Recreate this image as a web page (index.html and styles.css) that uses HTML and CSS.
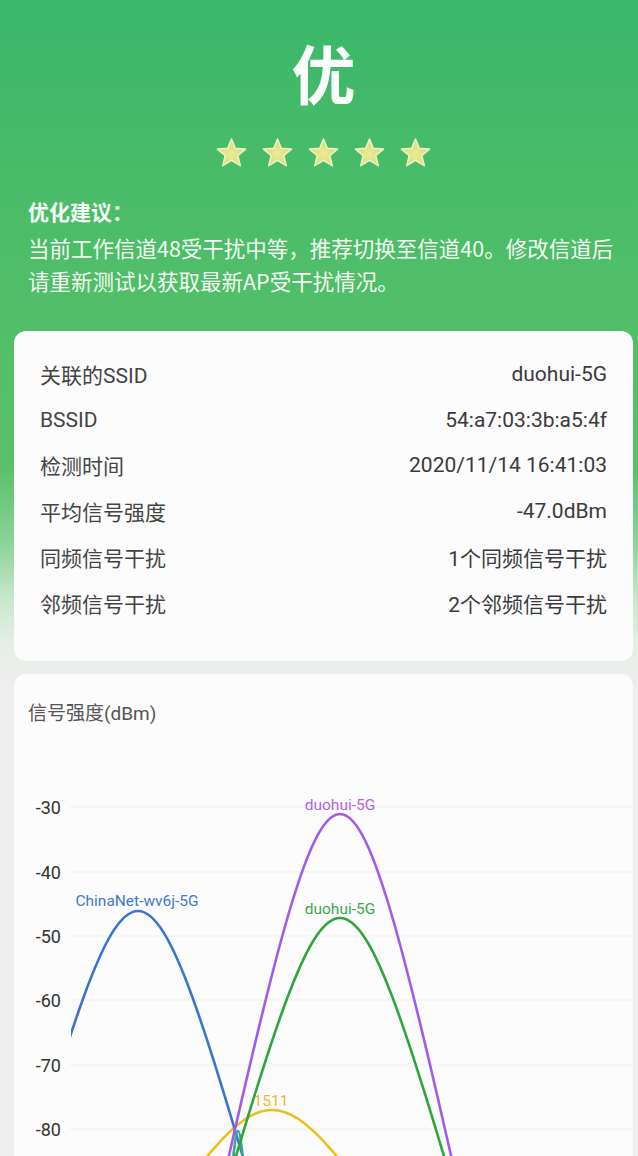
FILE: index.html
```html
<!DOCTYPE html>
<html lang="zh-CN">
<head>
<meta charset="utf-8">
<title>信号检测结果</title>
<link rel="stylesheet" href="styles.css">
</head>
<body>
<div class="page">
  <section class="hero">
    <div class="grade">优</div>
    <div class="stars">
      <svg viewBox="0 0 32 32"><use href="#star"/></svg>
      <svg viewBox="0 0 32 32"><use href="#star"/></svg>
      <svg viewBox="0 0 32 32"><use href="#star"/></svg>
      <svg viewBox="0 0 32 32"><use href="#star"/></svg>
      <svg viewBox="0 0 32 32"><use href="#star"/></svg>
    </div>
    <h2 class="advice-title">优化建议：</h2>
    <p class="advice-text">当前工作信道48受干扰中等，推荐切换至信道40。修改信道后请重新测试以获取最新AP受干扰情况。</p>
  </section>

  <section class="card info">
    <div class="row"><span class="label">关联的SSID</span><span class="value">duohui-5G</span></div>
    <div class="row"><span class="label">BSSID</span><span class="value">54:a7:03:3b:a5:4f</span></div>
    <div class="row"><span class="label">检测时间</span><span class="value">2020/11/14 16:41:03</span></div>
    <div class="row"><span class="label">平均信号强度</span><span class="value">-47.0dBm</span></div>
    <div class="row"><span class="label">同频信号干扰</span><span class="value">1个同频信号干扰</span></div>
    <div class="row"><span class="label">邻频信号干扰</span><span class="value">2个邻频信号干扰</span></div>
  </section>

  <section class="card chart">
    <div class="chart-title">信号强度(dBm)</div>
    <svg class="plot" viewBox="0 0 619 400">
      <defs>
        <clipPath id="plotArea"><rect x="57" y="0" width="562" height="400"/></clipPath>
      </defs>
      <g class="grid">
        <line x1="56" y1="48" x2="619" y2="48"/>
        <line x1="56" y1="113" x2="619" y2="113"/>
        <line x1="56" y1="177" x2="619" y2="177"/>
        <line x1="56" y1="241" x2="619" y2="241"/>
        <line x1="56" y1="306" x2="619" y2="306"/>
        <line x1="56" y1="370" x2="619" y2="370"/>
      </g>
      <g class="axis">
        <text x="47" y="48">-30</text>
        <text x="47" y="113">-40</text>
        <text x="47" y="177">-50</text>
        <text x="47" y="241">-60</text>
        <text x="47" y="306">-70</text>
        <text x="47" y="370">-80</text>
      </g>
      <g clip-path="url(#plotArea)" class="curves">
        <path class="c-yellow" d="M118,499 C258,301.7 258,301.7 398,499"/>
        <path class="c-blue" d="M-10.4,499 C124,36.3 124,36.3 258.4,499"/>
        <path class="c-teal" d="M211,499 C224,329.7 224,329.7 237,499"/>
        <path class="c-green" d="M191.6,499 C326,45.7 326,45.7 460.4,499"/>
        <path class="c-purple" d="M191.6,499 C326,-93 326,-93 460.4,499"/>
      </g>
      <g class="labels">
        <text class="l-purple" x="326" y="51">duohui-5G</text>
        <text class="l-green" x="326" y="155">duohui-5G</text>
        <text class="l-blue" x="123" y="147">ChinaNet-wv6j-5G</text>
        <text class="l-yellow" x="257" y="347">1511</text>
      </g>
    </svg>
  </section>
</div>

<svg class="sprite" width="0" height="0" aria-hidden="true">
  <defs>
    <radialGradient id="starFill" cx="50%" cy="55%" r="60%">
      <stop offset="0" stop-color="#eeea9c"/>
      <stop offset="0.6" stop-color="#dcdf7e"/>
      <stop offset="1" stop-color="#c2cf66"/>
    </radialGradient>
    <symbol id="star" viewBox="0 0 32 32">
      <path d="M16,2 L19.7,11.1 L29.6,11.7 L22,18 L24.5,27.8 L16,22.5 L7.5,27.8 L10,18 L2.4,11.7 L12.3,11.1 Z"
            fill="url(#starFill)" stroke="#eef3bf" stroke-width="1.6" stroke-linejoin="round"/>
    </symbol>
  </defs>
</svg>
</body>
</html>
```

FILE: styles.css
```css
html, body {
  margin: 0;
  padding: 0;
  width: 638px;
  height: 1156px;
  overflow: hidden;
}

body {
  font-family: Roboto, "Noto Sans CJK SC", sans-serif;
  background: linear-gradient(180deg,
    #3ab76a 0px,
    #4bbc69 200px,
    #53be69 330px,
    #5cc06b 470px,
    #8fd39a 545px,
    #c9e8cd 600px,
    #e6efe7 645px,
    #eeeeee 690px,
    #eeeeee 100%);
}

.page {
  padding: 0 5px 0 14px;
}

.sprite {
  position: absolute;
  width: 0;
  height: 0;
}

/* hero */
.hero {
  padding: 39px 14px 0;
  color: #ffffff;
  font-family: "Noto Sans CJK SC", sans-serif;
}

.grade {
  font-size: 64px;
  line-height: 64px;
  font-weight: 700;
  text-align: center;
  color: #fbfffb;
}

.stars {
  display: flex;
  justify-content: center;
  gap: 13px;
  margin-top: 34px;
}

.stars svg {
  width: 33px;
  height: 33px;
  display: block;
}

.advice-title {
  margin: 26px 0 0;
  font-size: 21px;
  line-height: 30px;
  font-weight: 700;
  color: #f6fff6;
}

.advice-text {
  margin: 5px 0 0;
  font-size: 21.5px;
  line-height: 33px;
  font-weight: 400;
  color: #f2fbf2;
}

/* cards */
.card {
  background: #fcfcfc;
  border-radius: 12px;
}

.info {
  margin-top: 34px;
  padding: 20px 26px 35px;
}

.row {
  display: flex;
  justify-content: space-between;
  align-items: center;
  height: 45.8px;
  font-size: 21px;
  color: #444444;
}

.value {
  color: #3a3a3a;
}

.chart {
  margin-top: 13px;
  padding-top: 28px;
  height: 480px;
}

.chart-title {
  padding-left: 14px;
  font-size: 19px;
  line-height: 24px;
  color: #555555;
}

.plot {
  display: block;
  margin-top: 33px;
  width: 619px;
  height: 400px;
}

.grid line {
  stroke: #f0f0f0;
  stroke-width: 1;
}

.axis text {
  font-family: Roboto, sans-serif;
  font-size: 18px;
  fill: #333333;
  text-anchor: end;
  dominant-baseline: central;
}

.curves path {
  fill: none;
  stroke-width: 2.6;
}

.c-purple { stroke: #a45ae6; }
.c-green { stroke: #2fa63a; }
.c-blue { stroke: #3b74cf; }
.c-yellow { stroke: #efbd1c; }
.c-teal { stroke: #3aa597; }

.labels text {
  font-family: Roboto, sans-serif;
  font-size: 15.5px;
  text-anchor: middle;
}

.l-purple { fill: #b064e2; }
.l-green { fill: #3ba84a; }
.l-blue { fill: #3f79c8; }
.l-yellow { fill: #e7b835; }
```
